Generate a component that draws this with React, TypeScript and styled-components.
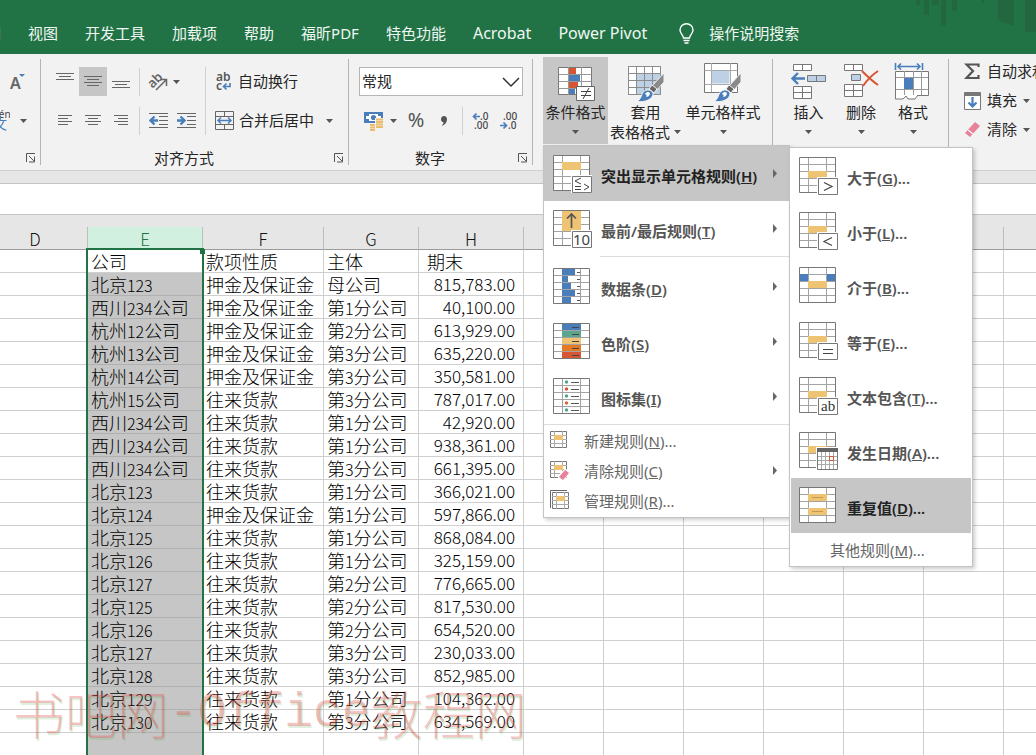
import React from "react";
import styled, { createGlobalStyle, css } from "styled-components";

const green = "#217346";
const ink = "#262626";
const blue = "#4a7ebb";
const paleBlue = "#bdd0e6";
const yellow = "#eec373";
const red = "#d65532";
const gridGray = "#777";
const uiFont = `"Noto Sans", "Noto Sans CJK SC", sans-serif`;
const cellFont = `"Noto Sans CJK SC", sans-serif`;

const Global = createGlobalStyle`
  * { box-sizing: border-box; }
  body { margin: 0; font-family: ${uiFont}; font-size: 15px; color: ${ink}; background: #fff; }
  button, input, select { font: inherit; color: inherit; }
  svg { display: block; flex: none; }
`;

const Window = styled.div`
  position: relative;
  display: flex;
  flex-direction: column;
  height: 100vh;
  overflow: hidden;
`;

/* ---------- title bar ---------- */

const TitleBar = styled.header`
  position: relative;
  flex: none;
  background: ${green};
  height: 54px;
  padding-top: 19px;
`;

const Decoration = styled.svg`
  position: absolute;
  top: 0;
  right: 0;
`;

const Tabs = styled.nav`
  position: relative;
  display: flex;
  align-items: center;
  gap: 27px;
  margin-left: -29px;
  height: 28px;
`;

const Tab = styled.button<{ $latin?: boolean }>`
  flex: none;
  border: 0;
  padding: 0;
  background: none;
  color: #f0f7f2;
  font-size: ${(p) => (p.$latin ? 16 : 15)}px;
  line-height: 28px;
  white-space: nowrap;
`;

const TellMe = styled(Tab)`
  display: flex;
  align-items: center;
  gap: 15px;
  padding-left: 5px;
`;

/* ---------- ribbon ---------- */

const Ribbon = styled.div`
  position: relative;
  z-index: 2;
  flex: none;
  display: flex;
  height: 117px;
  background: #f2f2f2;
  border-bottom: 1px solid #cfcfcf;
`;

const Group = styled.section<{ $width: number; $last?: boolean }>`
  position: relative;
  flex: none;
  width: ${(p) => p.$width}px;
  padding-top: 3px;
  &::after {
    content: "";
    display: ${(p) => (p.$last ? "none" : "block")};
    position: absolute;
    right: 0;
    top: 5px;
    bottom: 5px;
    width: 1px;
    background: #b4b4b4;
  }
`;

const GroupBody = styled.div<{ $pad?: number; $top?: number }>`
  display: flex;
  height: 87px;
  padding-left: ${(p) => p.$pad ?? 0}px;
  padding-top: ${(p) => p.$top ?? 0}px;
`;

const GroupFooter = styled.footer`
  display: grid;
  grid-template-columns: 1fr auto;
  column-gap: 6px;
  align-items: center;
  height: 28px;
  padding-right: 5px;
  line-height: 28px;
  text-align: center;
`;

const Column = styled.div<{ $gap?: number }>`
  display: flex;
  flex-direction: column;
  gap: ${(p) => p.$gap ?? 10}px;
`;

const Line = styled.div<{ $gap?: number }>`
  display: flex;
  align-items: center;
  gap: ${(p) => p.$gap ?? 0}px;
  height: 29px;
`;

const Rule = styled.span<{ $height: number; $margin: string }>`
  flex: none;
  width: 1px;
  height: ${(p) => p.$height}px;
  margin: ${(p) => p.$margin};
  background: #d0d0d0;
`;

const ToolButton = styled.button<{ $active?: boolean; $width?: number; $gap?: number }>`
  flex: none;
  display: flex;
  align-items: center;
  justify-content: ${(p) => (p.$width ? "center" : "flex-start")};
  gap: ${(p) => p.$gap ?? 4}px;
  width: ${(p) => (p.$width ? p.$width + "px" : "auto")};
  height: 29px;
  padding: 0;
  border: 0;
  background: ${(p) => (p.$active ? "#c6c6c6" : "transparent")};
  white-space: nowrap;
`;

const ToolLabel = styled.span`
  padding-bottom: 2px;
`;

const Launcher = styled.button`
  display: flex;
  padding: 0;
  border: 0;
  background: none;
`;

const BigButton = styled.button<{ $width: number; $active?: boolean }>`
  flex: none;
  display: flex;
  flex-direction: column;
  align-items: center;
  width: ${(p) => p.$width}px;
  height: 87px;
  padding: 5px 0 0;
  border: 0;
  background: ${(p) => (p.$active ? "#c6c6c6" : "transparent")};
  line-height: 20px;
  white-space: nowrap;
`;

const SecondLine = styled.span`
  display: flex;
  align-items: center;
  gap: 4px;
  height: 20px;
`;

const SelectBox = styled.label`
  position: relative;
  display: block;
  width: 164px;
  height: 29px;
  svg {
    position: absolute;
    right: 3px;
    top: 9px;
    pointer-events: none;
  }
`;

const FormatSelect = styled.select`
  appearance: none;
  width: 100%;
  height: 29px;
  padding: 0 2px 2px;
  border: 1px solid #b5b5b5;
  border-radius: 0;
  background: #fff;
`;

/* ---------- menus ---------- */

const MenuAnchor = styled.div`
  position: relative;
  z-index: 1;
  flex: none;
`;

const menuFrame = css`
  position: absolute;
  background: #fff;
  border: 1px solid #c3c3c3;
  box-shadow: 2px 2px 4px rgba(0, 0, 0, 0.2);
`;

const Menu = styled.div`
  ${menuFrame}
  top: 88px;
  left: 0;
  width: 247px;
  padding-bottom: 1px;
`;

const SubMenu = styled.div`
  ${menuFrame}
  top: 90px;
  left: 246px;
  width: 184px;
  padding: 0 1px;
`;

const RuleItem = styled.button<{ $active?: boolean }>`
  display: grid;
  grid-template-columns: 39px 1fr 16px;
  column-gap: 9px;
  align-items: center;
  width: 100%;
  height: 55px;
  padding: 0 0 0 9px;
  border: 0;
  background: ${(p) => (p.$active ? "#c6c6c6" : "transparent")};
  color: ${(p) => (p.$active ? "#222" : "#555")};
  font-weight: 600;
  line-height: 20px;
  text-align: left;
  white-space: nowrap;
`;

const SubRuleItem = styled(RuleItem)`
  grid-template-columns: 39px 1fr;
  padding-left: 8px;
`;

const RuleLabel = styled.span`
  padding-top: 4px;
`;

const SmallItem = styled.button`
  display: grid;
  grid-template-columns: 20px 1fr 16px;
  column-gap: 14px;
  align-items: center;
  width: 100%;
  height: 30px;
  padding: 0 0 2px 6px;
  border: 0;
  background: none;
  color: #666;
  text-align: left;
  white-space: nowrap;
`;

const MoreRules = styled.button`
  display: block;
  width: 100%;
  height: 33px;
  padding: 0 0 0 39px;
  border: 0;
  background: none;
  color: #666;
  text-align: left;
`;

const Divider = styled.hr<{ $inset?: number }>`
  height: 1px;
  margin: 0 0 ${(p) => (p.$inset ? 2 : 1)}px ${(p) => p.$inset ?? 0}px;
  border: 0;
  background: #dcdcdc;
`;

/* ---------- sheet ---------- */

const FormulaArea = styled.div`
  flex: none;
  padding-top: 12px;
  background: #e6e6e6;
`;

const FormulaInput = styled.input`
  display: block;
  width: 100%;
  height: 32px;
  border: solid #c4c4c4;
  border-width: 1px 0;
  padding: 0 8px;
  background: #fff;
`;

const Sheet = styled.main`
  flex: 1;
  min-height: 0;
  overflow: hidden;
  padding-top: 12px;
  background: linear-gradient(#e6e6e6 12px, #fff 12px);
`;

const Grid = styled.table`
  width: max-content;
  margin-left: -17px;
  table-layout: fixed;
  border-spacing: 0;
  font-family: ${cellFont};
  font-weight: 300;
  color: #000;
`;

const HeadCell = styled.th<{ $selected?: boolean }>`
  position: relative;
  height: 23px;
  padding: 2px 0 0;
  border-right: 1px solid #bdbdbd;
  border-bottom: 1px solid #9b9b9b;
  background: ${(p) => (p.$selected ? "#d2f0e0" : "#e6e6e6")};
  color: ${(p) => (p.$selected ? green : "#111")};
  font-size: 17px;
  font-weight: 300;
  line-height: 20px;
`;

const SelectionFrame = styled.span`
  position: absolute;
  z-index: 1;
  top: 21px;
  left: -2px;
  right: -2px;
  height: 100vh;
  border: 2px solid ${green};
  pointer-events: none;
  &::after {
    content: "";
    position: absolute;
    top: -1px;
    right: -3px;
    width: 5px;
    height: 5px;
    background: ${green};
  }
`;

const Cell = styled.td<{ $selected?: boolean; $amount?: boolean; $indent?: boolean }>`
  height: 23px;
  padding: 0 ${(p) => (p.$amount ? 8 : 0)}px 0 ${(p) => (p.$indent ? 8 : 3)}px;
  border-right: 1px solid #cfcfcf;
  border-bottom: 1px solid ${(p) => (p.$selected ? "#b0b0b0" : "#cfcfcf")};
  background: ${(p) => (p.$selected ? "#c6c6c6" : "#fff")};
  font-size: ${(p) => (p.$amount ? 17 : 18)}px;
  line-height: 20px;
  text-align: ${(p) => (p.$amount ? "right" : "left")};
  white-space: nowrap;
`;

const Digits = styled.span`
  font-size: 16px;
`;

const Watermark = styled.div`
  position: absolute;
  z-index: 1;
  left: 13px;
  bottom: 12px;
  display: flex;
  align-items: center;
  height: 60px;
  color: rgba(226, 70, 70, 0.32);
  text-shadow: 1px 2px 0 rgba(90, 180, 90, 0.2);
  font-family: "Noto Sans CJK SC", sans-serif;
  font-size: 52px;
  font-weight: 300;
  line-height: 60px;
  white-space: nowrap;
  pointer-events: none;
`;

const WatermarkLatin = styled.span`
  font-family: "Liberation Mono", monospace;
  font-size: 48px;
`;

/* ---------- icons ---------- */

const Caret = () => (
  <svg width="7" height="4" viewBox="0 0 7 4">
    <path d="M0 0h7L3.500 4z" fill="#555" />
  </svg>
);

const LauncherIcon = () => (
  <svg width="11" height="10" viewBox="0 0 11 10" fill="none" stroke="#555">
    <path d="M1.500 9V.5H10M4 3l5 5M9.500 3.500v5.500h-5.500" />
  </svg>
);

const lineSets: Record<string, number[][]> = {
  top: [[0, 18, 1], [3, 15, 4], [0, 18, 7]],
  middle: [[0, 18, 1], [3, 15, 4], [0, 18, 7], [3, 15, 10]],
  left: [[0, 14, 1], [0, 10, 4], [0, 14, 7], [0, 10, 10]],
  center: [[0, 16, 1], [3, 13, 4], [0, 16, 7], [3, 13, 10]],
  right: [[0, 14, 1], [4, 14, 4], [0, 14, 7], [4, 14, 10]],
};
const iconWidths: Record<string, number> = { top: 18, middle: 18, left: 14, center: 16, right: 14 };

const AlignIcon = ({ kind, shift = 0 }: { kind: string; shift?: number }) => (
  <svg width={iconWidths[kind]} height="24" viewBox={`0 0 ${iconWidths[kind]} 24`} stroke="#666">
    {lineSets[kind].map(([a, b, y]) => (
      <path key={y} d={`M${a} ${y + 5.5 + shift}H${b}`} />
    ))}
  </svg>
);

const IndentIcon = ({ out }: { out?: boolean }) => (
  <svg width="19" height="17" viewBox="0 0 19 17" fill="none" stroke="#666">
    <path d="M0 1.500h19M10 4.500h9M10 8.500h9M10 12.500h9M0 15.500h19" />
    {out ? (
      <path d="M9 8.500H2M5.500 4.500l-4 4 4 4" stroke={blue} strokeWidth="2.400" />
    ) : (
      <path d="M0 8.500h7M3.500 4.500l4 4-4 4" stroke={blue} strokeWidth="2.400" />
    )}
  </svg>
);

const OrientationIcon = () => (
  <svg width="20" height="20" viewBox="0 0 20 20">
    <text x="-8" y="3" transform="translate(8 9) rotate(-45)" fontSize="13" fontWeight="600" fill="#666">ab</text>
    <path d="M8 18L18 8M12.500 7.500h6V14" fill="none" stroke="#666" strokeWidth="1.500" />
  </svg>
);

const WrapIcon = () => (
  <svg width="17" height="20" viewBox="0 0 17 20">
    <text x="1" y="9" fontSize="12" fontWeight="600" fill="#555">ab</text>
    <text x="1" y="18" fontSize="12" fontWeight="600" fill="#555">c</text>
    <path d="M15 11v3.500H9M11.500 11.500l-3 3 3 3" fill="none" stroke={blue} strokeWidth="1.600" />
  </svg>
);

const MergeIcon = () => (
  <svg width="20" height="20" viewBox="0 0 20 20" fill="none" stroke="#666">
    <path d="M.5 .5h18v18H.5zM.5 5.500h18M.5 13.500h18M9.500 .5v5M9.500 13.500v5" />
    <path d="M3 9.500h13M6 6.500l-3 3 3 3M13 6.500l3 3-3 3" stroke={blue} strokeWidth="1.500" />
  </svg>
);

const CurrencyIcon = () => (
  <svg width="21" height="20" viewBox="0 0 21 20">
    <rect x="0" y="1" width="19" height="11" fill={blue} />
    <path d="M5 3h9v2h3v3h-3v2H5V8H2V5h3z" fill="#fff" />
    <circle cx="9.500" cy="6.500" r="2.600" fill={blue} />
    <path d="M11 7h9v12H5v-6h6z" fill="#f2f2f2" />
    <path d="M12 8.500h7M12 11h7M12 13.500h7M12 16h7M6 14h5M6 16.500h5M6 19h5" stroke="#e9bd6c" strokeWidth="1.800" />
  </svg>
);

const CommaIcon = () => (
  <svg width="8" height="12" viewBox="0 0 8 12">
    <path d="M4 1c2 0 3 1.400 3 3.200C7 7.500 5 10 1.500 11c1.400-1.400 2-2.600 2-3.800C2 7 1 6 1 4.200 1 2.400 2.200 1 4 1z" fill="#555" />
  </svg>
);

const DecimalIcon = ({ more }: { more?: boolean }) => (
  <svg width="18" height="18" viewBox="0 0 18 18" fontSize="10" fontWeight="500" fill="#444">
    <text x={more ? 8 : 3} y="8">{more ? ".0" : ".00"}</text>
    <text x={more ? 2 : 8} y="17">{more ? ".00" : ".0"}</text>
    {more ? (
      <path d="M8 4.500H2M4.500 1.500l-3 3 3 3" fill="none" stroke={blue} strokeWidth="1.700" />
    ) : (
      <path d="M0 13.500h6M3.500 10.500l3 3-3 3" fill="none" stroke={blue} strokeWidth="1.700" />
    )}
  </svg>
);

const BigIcon = ({ children }: { children: React.ReactNode }) => (
  <svg width="38" height="40" viewBox="0 0 38 40" fill="none" stroke={gridGray}>
    {children}
  </svg>
);

const Brush = () => (
  <g stroke="none">
    <path d="M37 11v9l-8 9-5-4z" fill="#8a8a8a" stroke="#f2f2f2" />
    <path d="M25 23l5 4-3 4-5-4z" fill="#666" stroke="#f2f2f2" />
    <path d="M10 39.500c4-2 4-6 6-9 3-4 9-3 10 1 0 6-8 9-16 8z" fill={blue} stroke="#f2f2f2" />
    <path d="M18 32c2-3 5-2 5 0-1 2-2 3-4 3 1-1 1-2-1-3z" fill="#fff" />
  </g>
);

const ConditionalIcon = () => (
  <BigIcon>
    <path d="M1.500 5.500h33v27h-33z" fill="#fff" />
    <path d="M1.500 12.500h33M1.500 19.500h33M1.500 26.500h33M11.500 5v28M24.500 5v28" stroke="#999" />
    <g stroke="none">
      <path d="M12 6h7v6h-7zM12 20h9v6h-9z" fill={red} />
      <path d="M12 13h11v6H12zM12 27h6v5h-6z" fill={blue} />
    </g>
    <path d="M19.500 24.500h18v14h-18z" fill="#fff" stroke="#666" />
    <path d="M24 29.500h10M24 33.500h10M32 26l-6 11" stroke="#444" />
  </BigIcon>
);

const TableFormatIcon = () => (
  <BigIcon>
    <path d="M1.500 4.500h32v28h-32z" fill="#fff" />
    <path d="M9.500 11.500h24v21h-24z" fill={paleBlue} stroke="none" />
    <path d="M1.500 4.500h32v28h-32zM1.500 11.500h32M1.500 18.500h32M1.500 25.500h32M9.500 4v28M17.500 4v28M25.500 4v28" stroke="#8c8c8c" />
    <Brush />
  </BigIcon>
);

const CellStyleIcon = () => (
  <BigIcon>
    <path d="M.5 1.500h33v29H.5z" fill="#fff" />
    <path d="M7.500 8.500h18v13h-18z" fill={paleBlue} stroke="none" />
    <path d="M.5 8.500h33M.5 22.500h33M7.500 1v29M26.500 1v29" stroke="#aaa" />
    <Brush />
  </BigIcon>
);

const InsertIcon = () => (
  <BigIcon>
    <path d="M3.500 2.500h18v6h-18zM12.500 2v6M3.500 24.500h18v12h-18zM3.500 30.500h18M12.500 24v12" fill="#fff" />
    <path d="M17.500 13.500h18v6h-18zM26.500 13v6" fill={paleBlue} />
    <path d="M15 16.500H3M8 11l-5.500 5.500L8 22" stroke={blue} strokeWidth="2.400" />
  </BigIcon>
);

const DeleteIcon = () => (
  <BigIcon>
    <path d="M2.500 2.500h18v6h-18zM11.500 2v6M2.500 22.500h18v12h-18zM2.500 28.500h18M11.500 22v12" fill="#fff" />
    <path d="M9.500 12.500h9v6h-9z" fill={paleBlue} />
    <path d="M20 9c5 5 10 10 16 14M36 9c-6 4-11 9-15 15" stroke={red} strokeWidth="2" />
  </BigIcon>
);

const FormatIcon = () => (
  <BigIcon>
    <path d="M1.500 1v7M28.500 1v7M4 4.500h22M7 1.500l-3 3 3 3M23 1.500l3 3-3 3" stroke={blue} strokeWidth="1.600" />
    <path d="M1.500 9.500h33v24h-33z" fill="#fff" />
    <path d="M1.500 15.500h33M1.500 27.500h33M10.500 9v24M19.500 9v24M27.500 9v24" stroke="#999" />
    <path d="M10 16h9v11h-9z" fill={blue} stroke="none" />
    <path d="M1.500 33v4H9l3-3 2 3h7l3-4" fill="#fff" />
  </BigIcon>
);

const EraserIcon = () => (
  <svg width="17" height="17" viewBox="0 0 17 17">
    <path d="M11 1l5 4-10 11-5-4z" fill="#e8829b" />
    <path d="M4 9l5 4" stroke="#f7f7f7" strokeWidth="1.500" />
  </svg>
);

const FillIcon = () => (
  <svg width="17" height="18" viewBox="0 0 17 18" fill="none">
    <path d="M.5 .5h16v17H.5z" fill="#fff" stroke="#777" />
    <path d="M1 2.500h15" stroke="#777" strokeWidth="3" />
    <path d="M8.500 5v9M4.500 10.500l4 4 4-4" stroke={blue} strokeWidth="2.200" />
  </svg>
);

const SigmaIcon = () => (
  <svg width="17" height="17" viewBox="0 0 17 17">
    <path d="M14.500 4V1.500h-12L9 8l-6.500 7h12V12" fill="none" stroke="#555" strokeWidth="2.200" />
  </svg>
);

const Bulb = () => (
  <svg width="15" height="21" viewBox="0 0 15 21" fill="none" stroke="#fff" strokeWidth="1.400">
    <path d="M4.500 15c0-3-3.500-4-3.500-8a6.500 6.300 0 0 1 13 0c0 4-3.500 5-3.500 8zM4.500 17.500h6M5.500 20h4" />
  </svg>
);

const RightArrow = () => (
  <svg width="5" height="9" viewBox="0 0 5 9">
    <path d="M0 0v9l4-4.500z" fill="#666" />
  </svg>
);

type Fill = [x: number, y: number, w: number, h: number, color: string];

const GridIcon = ({ fills, children }: { fills: Fill[]; children?: React.ReactNode }) => (
  <svg width="39" height="38" viewBox="0 0 39 38" fill="none">
    <path d="M.5 .5h36v35H.5z" fill="#fff" />
    <path d="M.5 7.500h36M.5 14.500h36M.5 21.500h36M.5 28.500h36M9.500 0v35M27.500 0v35" stroke="#a3a3a3" />
    {fills.map(([x, y, w, h, color], i) => (
      <rect key={i} x={x} y={y} width={w} height={h} fill={color} />
    ))}
    <path d="M.5 .5h36v35H.5z" stroke={gridGray} />
    {children}
  </svg>
);

const Badge = ({ children }: { children: React.ReactNode }) => (
  <g>
    <path d="M18 20h21v18H18z" fill="#fff" />
    <path d="M19.500 21.500h19v16h-19z" fill="#fff" stroke="#777" />
    {children}
  </g>
);

const highlightBand: Fill[] = [[9, 14, 19, 7, yellow]];
const scaleColors = [blue, "#5ba58f", yellow, "#e47a24", red];
const barWidths = [13, 6, 9, 13, 9];
const dotColors = ["#4fa58a", red, "#4fa58a", "#e0672d", "#4fa58a"];

const HighlightIcon = () => (
  <GridIcon fills={[[9, 7, 19, 8, yellow]]}>
    <Badge>
      <path d="M28 23l-6 3 6 3M22 31.500h6M22 34.500h6M31 29l5 3-5 3" stroke="#444" />
    </Badge>
  </GridIcon>
);
const TopBottomIcon = () => (
  <GridIcon fills={[[9, 1, 19, 20, yellow]]}>
    <path d="M18.500 18V4M14 8.500L18.500 4 23 8.500" stroke="#555" strokeWidth="1.700" />
    <Badge>
      <text x="20" y="35" fontSize="15" fontWeight="400" fill="#444">10</text>
    </Badge>
  </GridIcon>
);
const DataBarIcon = () => (
  <GridIcon fills={barWidths.map((w, i): Fill => [9, i * 7 + 1, w, 6, blue])}>
    <path d="M24 4.500h3M24 11.500h3M24 18.500h3M24 25.500h3M24 32.500h3" stroke="#555" />
  </GridIcon>
);
const ScaleIcon = () => (
  <GridIcon fills={scaleColors.map((c, i): Fill => [9, i * 7 + 1, 19, 6, c])}>
    <path d="M19 4.500h7M19 11.500h7M19 18.500h7M19 25.500h7M19 32.500h7" stroke="#444" />
  </GridIcon>
);
const IconSetIcon = () => (
  <GridIcon fills={[]}>
    {dotColors.map((c, i) => (
      <circle key={i} cx="13.500" cy={i * 7 + 4} r="1.700" fill={c} />
    ))}
    <path d="M18 4.500h8M18 11.500h8M18 18.500h8M18 25.500h8M18 32.500h8" stroke="#555" />
  </GridIcon>
);
const CompareIcon = ({ d }: { d: string }) => (
  <GridIcon fills={highlightBand}>
    <Badge>
      <path d={d} stroke="#444" strokeWidth="1.200" />
    </Badge>
  </GridIcon>
);
const BetweenIcon = () => (
  <GridIcon fills={[[0, 7, 9, 7, blue], [28, 7, 9, 7, blue], [9, 14, 19, 7, yellow]]} />
);
const TextIcon = () => (
  <GridIcon fills={highlightBand}>
    <Badge>
      <text x="22" y="34" fontSize="15" fontFamily="Liberation Serif, serif" fontWeight="400" fill="#333">ab</text>
    </Badge>
  </GridIcon>
);
const DateIcon = () => (
  <GridIcon fills={highlightBand}>
    <path d="M17 15h22v23H17z" fill="#fff" />
    <path d="M18.500 17.500h20v20h-20z" fill="#fff" stroke="#777" />
    <path d="M18 18h21" stroke="#666" strokeWidth="4" />
    <path d="M19 24.500h19M19 28.500h19M19 32.500h19M22.500 20v17M26.500 20v17M30.500 20v17M34.500 20v17" stroke="#aaa" />
    <path d="M30.500 24.500h4v4h-4z" stroke={red} />
  </GridIcon>
);
const DuplicateIcon = () => (
  <GridIcon fills={[[9, 7, 19, 7, yellow], [9, 21, 19, 7, yellow]]}>
    <path d="M13 10.500h11M13 24.500h11" stroke="#c29a4c" />
  </GridIcon>
);

const SmallRuleIcon = ({ kind }: { kind: "new" | "clear" | "manage" }) => (
  <svg width="20" height="20" viewBox="0 0 20 20" fill="none">
    {kind === "manage" && <path d="M.5 18V.5H17" stroke="#666" />}
    <g transform={kind === "manage" ? "translate(2 2)" : "translate(0 1)"}>
      <path d="M.5 .5h16v16H.5z" fill="#fff" stroke="#777" />
      <path d="M0 4.500h17M0 8.500h17M0 12.500h17M4.500 0v17M12.500 0v17" stroke="#aaa" />
      <path d="M4 4h9v5H4z" fill={yellow} />
    </g>
    {kind === "clear" && (
      <g>
        <path d="M15 8l5 5-6 7H8v-4z" fill="#fff" />
        <path d="M15 10l4 3-6 7-4-3z" fill="#e8829b" />
      </g>
    )}
  </svg>
);

/* ---------- data ---------- */

const tabs: [string, boolean?][] = [
  ["审阅"], ["视图"], ["开发工具"], ["加载项"], ["帮助"], ["福昕PDF"], ["特色功能"], ["Acrobat", true], ["Power Pivot", true],
];

const rules = [
  { label: "突出显示单元格规则", letter: "H", icon: <HighlightIcon />, active: true },
  { label: "最前/最后规则", letter: "T", icon: <TopBottomIcon />, divider: true },
  { label: "数据条", letter: "D", icon: <DataBarIcon /> },
  { label: "色阶", letter: "S", icon: <ScaleIcon /> },
  { label: "图标集", letter: "I", icon: <IconSetIcon /> },
];

const highlightRules = [
  { label: "大于", letter: "G", icon: <CompareIcon d="M25 25.500l8 4-8 4" /> },
  { label: "小于", letter: "L", icon: <CompareIcon d="M33 25.500l-8 4 8 4" /> },
  { label: "介于", letter: "B", icon: <BetweenIcon /> },
  { label: "等于", letter: "E", icon: <CompareIcon d="M24 27.500h10M24 31.500h10" /> },
  { label: "文本包含", letter: "T", icon: <TextIcon /> },
  { label: "发生日期", letter: "A", icon: <DateIcon /> },
  { label: "重复值", letter: "D", icon: <DuplicateIcon />, active: true },
];

const columns: [string, number][] = [
  ["D", 105], ["E", 115], ["F", 121], ["G", 95], ["H", 105],
  ["I", 80], ["J", 80], ["K", 80], ["L", 80], ["M", 80], ["N", 80], ["O", 80],
];

const deposit = "押金及保证金";
const trade = "往来货款";
const rows: string[][] = [
  ["公司", "款项性质", "主体", "期末"],
  ["北京123", deposit, "母公司", "815,783.00"],
  ["西川234公司", deposit, "第1分公司", "40,100.00"],
  ["杭州12公司", deposit, "第2分公司", "613,929.00"],
  ["杭州13公司", deposit, "第3分公司", "635,220.00"],
  ["杭州14公司", deposit, "第3分公司", "350,581.00"],
  ["杭州15公司", trade, "第3分公司", "787,017.00"],
  ["西川234公司", trade, "第1分公司", "42,920.00"],
  ["西川234公司", trade, "第1分公司", "938,361.00"],
  ["西川234公司", trade, "第3分公司", "661,395.00"],
  ["北京123", trade, "第1分公司", "366,021.00"],
  ["北京124", deposit, "第1分公司", "597,866.00"],
  ["北京125", trade, "第1分公司", "868,084.00"],
  ["北京126", trade, "第1分公司", "325,159.00"],
  ["北京127", trade, "第2分公司", "776,665.00"],
  ["北京125", trade, "第2分公司", "817,530.00"],
  ["北京126", trade, "第2分公司", "654,520.00"],
  ["北京127", trade, "第3分公司", "230,033.00"],
  ["北京128", trade, "第3分公司", "852,985.00"],
  ["北京129", trade, "第1分公司", "104,362.00"],
  ["北京130", trade, "第3分公司", "634,569.00"],
];
const rowCount = 30;

const CellText = ({ text }: { text: string }) => (
  <>
    {text.split(/(\d+)/).map((part, i) => (i % 2 ? <Digits key={i}>{part}</Digits> : part))}
  </>
);

const Shortcut = ({ label, letter, dots }: { label: string; letter: string; dots?: boolean }) => (
  <span>
    {label}(<u>{letter}</u>){dots ? "..." : ""}
  </span>
);

const Footer = ({ children }: { children?: React.ReactNode }) => (
  <GroupFooter>
    <span>{children}</span>
    <Launcher aria-label="对话框启动器"><LauncherIcon /></Launcher>
  </GroupFooter>
);

/* ---------- sections ---------- */

const FontGroup = () => (
  <Group $width={41}>
    <GroupBody $top={10}>
      <Column>
        <Line>
          <ToolButton $width={36} aria-label="减小字号">
            <svg width="16" height="18" viewBox="0 0 16 18">
              <text x="0" y="16" fontSize="16" fontWeight="600" fill="#666">A</text>
              <path d="M9 1h6l-3 3z" fill={blue} />
            </svg>
          </ToolButton>
        </Line>
        <Line $gap={10}>
          <ToolButton aria-label="拼音指南">
            <svg width="10" height="22" viewBox="0 0 10 22">
              <text x="-9" y="8" fontSize="10" fill="#444">wén</text>
              <text x="-7" y="19" fontSize="14" fill={blue}>文</text>
            </svg>
          </ToolButton>
          <Caret />
        </Line>
      </Column>
    </GroupBody>
    <Footer />
  </Group>
);

const AlignmentGroup = () => (
  <Group $width={308}>
    <GroupBody $pad={10} $top={10}>
      <Column>
        <Line>
          <ToolButton $width={28} aria-label="顶端对齐"><AlignIcon kind="top" shift={-3} /></ToolButton>
          <ToolButton $width={28} $active aria-label="垂直居中"><AlignIcon kind="middle" /></ToolButton>
          <ToolButton $width={28} aria-label="底端对齐"><AlignIcon kind="top" shift={5} /></ToolButton>
          <Rule $height={28} $margin="0 8px 0 4px" />
          <ToolButton $gap={5} aria-label="方向"><OrientationIcon /><Caret /></ToolButton>
        </Line>
        <Line>
          <ToolButton $width={28} aria-label="左对齐"><AlignIcon kind="left" /></ToolButton>
          <ToolButton $width={28} aria-label="居中"><AlignIcon kind="center" /></ToolButton>
          <ToolButton $width={28} aria-label="右对齐"><AlignIcon kind="right" /></ToolButton>
          <Rule $height={28} $margin="0 4px" />
          <ToolButton $width={28} aria-label="减少缩进量"><IndentIcon out /></ToolButton>
          <ToolButton $width={28} aria-label="增加缩进量"><IndentIcon /></ToolButton>
        </Line>
      </Column>
      <Rule $height={68} $margin="0 9px 0 5px" />
      <Column>
        <Line><ToolButton $gap={6}><WrapIcon /><ToolLabel>自动换行</ToolLabel></ToolButton></Line>
        <Line $gap={12}><ToolButton><MergeIcon /><ToolLabel>合并后居中</ToolLabel></ToolButton><Caret /></Line>
      </Column>
    </GroupBody>
    <Footer>对齐方式</Footer>
  </Group>
);

const PercentMark = styled.span`
  padding-bottom: 2px;
  font-size: 20px;
  color: #555;
`;

const NumberGroup = () => (
  <Group $width={184}>
    <GroupBody $pad={10} $top={10}>
      <Column>
        <SelectBox>
          <FormatSelect aria-label="数字格式"><option>常规</option></FormatSelect>
          <svg width="18" height="12" viewBox="0 0 18 12" fill="none" stroke="#333" strokeWidth="1.500">
            <path d="M1 2l8 8 8-8" />
          </svg>
        </SelectBox>
        <Line>
          <ToolButton $width={31} aria-label="会计数字格式"><CurrencyIcon /></ToolButton>
          <Caret />
          <ToolButton $width={38} aria-label="百分比样式"><PercentMark>%</PercentMark></ToolButton>
          <ToolButton $width={18} aria-label="千位分隔样式"><CommaIcon /></ToolButton>
          <Rule $height={28} $margin="0 4px 0 9px" />
          <ToolButton $width={28} aria-label="增加小数位数"><DecimalIcon more /></ToolButton>
          <ToolButton $width={28} aria-label="减少小数位数"><DecimalIcon /></ToolButton>
        </Line>
      </Column>
    </GroupBody>
    <Footer>数字</Footer>
  </Group>
);

const ConditionalMenu = () => (
  <Menu>
    {rules.map((r) => (
      <React.Fragment key={r.letter}>
        <RuleItem $active={r.active}>
          {r.icon}
          <RuleLabel><Shortcut label={r.label} letter={r.letter} /></RuleLabel>
          <RightArrow />
        </RuleItem>
        {r.divider && <Divider $inset={56} />}
      </React.Fragment>
    ))}
    <Divider />
    <SmallItem><SmallRuleIcon kind="new" /><Shortcut label="新建规则" letter="N" dots /></SmallItem>
    <SmallItem><SmallRuleIcon kind="clear" /><Shortcut label="清除规则" letter="C" /><RightArrow /></SmallItem>
    <SmallItem><SmallRuleIcon kind="manage" /><Shortcut label="管理规则" letter="R" dots /></SmallItem>
  </Menu>
);

const HighlightMenu = () => (
  <SubMenu>
    {highlightRules.map((r) => (
      <SubRuleItem key={r.letter} $active={r.active}>
        {r.icon}
        <RuleLabel><Shortcut label={r.label} letter={r.letter} dots /></RuleLabel>
      </SubRuleItem>
    ))}
    <MoreRules><Shortcut label="其他规则" letter="M" dots /></MoreRules>
  </SubMenu>
);

const StylesGroup = () => (
  <Group $width={240}>
    <GroupBody $pad={10}>
      <MenuAnchor>
        <BigButton $width={65} $active aria-expanded="true">
          <ConditionalIcon />条件格式<SecondLine><Caret /></SecondLine>
        </BigButton>
        <ConditionalMenu />
        <HighlightMenu />
      </MenuAnchor>
      <BigButton $width={75}>
        <TableFormatIcon />套用<SecondLine>表格格式<Caret /></SecondLine>
      </BigButton>
      <BigButton $width={80}>
        <CellStyleIcon />单元格样式<SecondLine><Caret /></SecondLine>
      </BigButton>
    </GroupBody>
  </Group>
);

const CellsGroup = () => (
  <Group $width={176}>
    <GroupBody $pad={9}>
      <BigButton $width={53}><InsertIcon />插入<SecondLine><Caret /></SecondLine></BigButton>
      <BigButton $width={52}><DeleteIcon />删除<SecondLine><Caret /></SecondLine></BigButton>
      <BigButton $width={52}><FormatIcon />格式<SecondLine><Caret /></SecondLine></BigButton>
    </GroupBody>
  </Group>
);

const EditingGroup = () => (
  <Group $width={120} $last>
    <GroupBody $pad={15}>
      <Column $gap={0}>
        <ToolButton $gap={6}><SigmaIcon /><ToolLabel>自动求和</ToolLabel></ToolButton>
        <ToolButton $gap={6}><FillIcon /><ToolLabel>填充</ToolLabel><Caret /></ToolButton>
        <ToolButton $gap={6}><EraserIcon /><ToolLabel>清除</ToolLabel><Caret /></ToolButton>
      </Column>
    </GroupBody>
  </Group>
);

const Worksheet = () => (
  <Sheet>
    <Grid>
      <colgroup>
        {columns.map(([name, width]) => <col key={name} style={{ width }} />)}
      </colgroup>
      <thead>
        <tr>
          {columns.map(([name], i) => (
            <HeadCell key={name} scope="col" $selected={name === "E"}>
              {i < 5 ? name : ""}
              {name === "E" && <SelectionFrame />}
            </HeadCell>
          ))}
        </tr>
      </thead>
      <tbody>
        {Array.from({ length: rowCount }, (_, r) => (
          <tr key={r}>
            {columns.map(([name], c) => {
              const amount = name === "H" && r > 0;
              const text = rows[r]?.[c - 1] ?? "";
              return (
                <Cell key={name} $selected={name === "E" && r > 0} $amount={amount} $indent={name === "H"}>
                  {amount ? text : <CellText text={text} />}
                </Cell>
              );
            })}
          </tr>
        ))}
      </tbody>
    </Grid>
  </Sheet>
);

export default function App() {
  return (
    <Window>
      <Global />
      <TitleBar>
        <Decoration width="124" height="34" viewBox="0 0 124 34" fill="#22673f">
          <path d="M4 0h4v5H4zM12 0h5v15h-5zM20 0h7v5h-7zM29 0h5v26h-5zM40 0h5v11h-5zM69 0h3v3h-3zM86 0h16v26l-16-6zM113 0h11v32h-11z" />
        </Decoration>
        <Tabs>
          {tabs.map(([name, latin]) => <Tab key={name} $latin={latin}>{name}</Tab>)}
          <TellMe><Bulb />操作说明搜索</TellMe>
        </Tabs>
      </TitleBar>
      <Ribbon>
        <FontGroup />
        <AlignmentGroup />
        <NumberGroup />
        <StylesGroup />
        <CellsGroup />
        <EditingGroup />
      </Ribbon>
      <FormulaArea><FormulaInput aria-label="编辑栏" /></FormulaArea>
      <Worksheet />
      <Watermark>书吧网<WatermarkLatin>-Office</WatermarkLatin>教程网</Watermark>
    </Window>
  );
}
